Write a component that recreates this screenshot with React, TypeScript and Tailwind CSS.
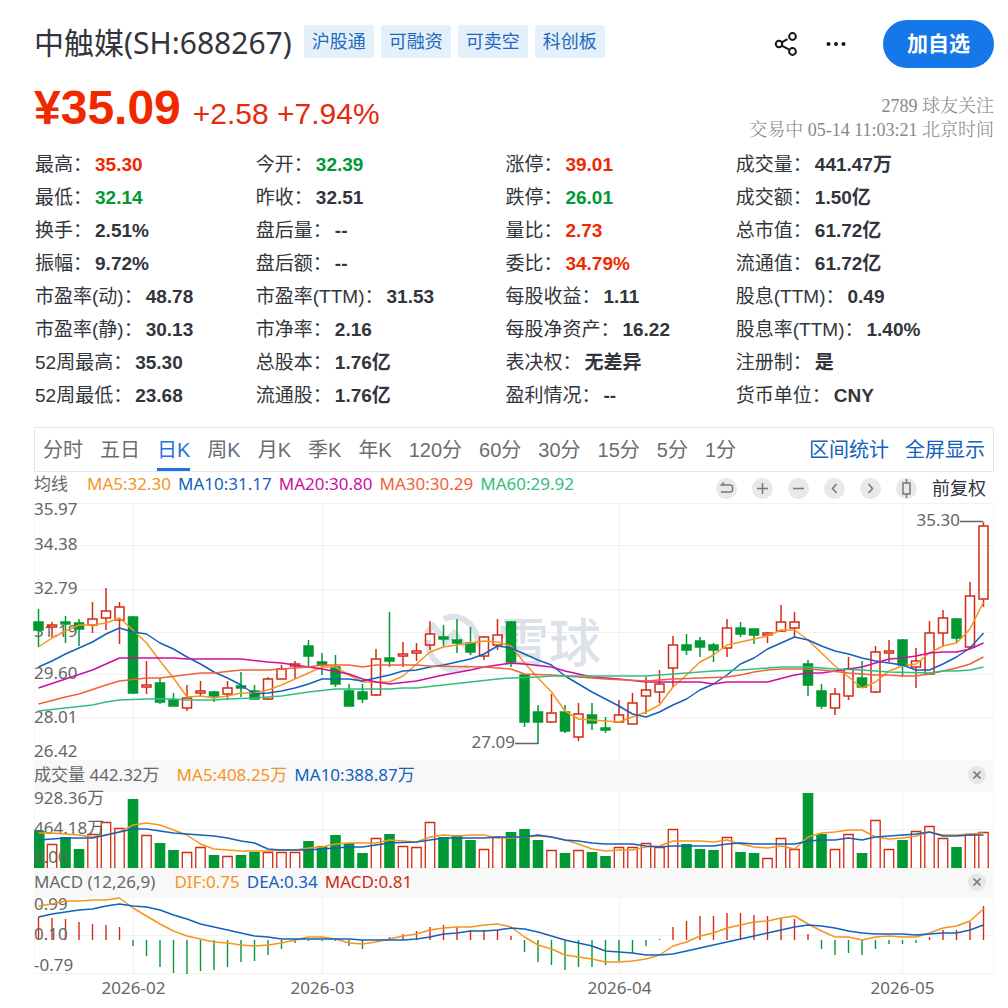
import { useState } from "react";
import clsx from "clsx";

const RED = "#d42a12";
const GREEN = "#009933";
const ORANGE = "#f7941d";
const BLUE = "#1261bd";

const tags = ["沪股通", "可融资", "可卖空", "科创板"];

type Tone = "up" | "down" | "flat";
type Cell = [label: string, value: string, tone?: Tone];

const quoteRows: Cell[][] = [
    [["最高", "35.30", "up"], ["今开", "32.39", "down"], ["涨停", "39.01", "up"], ["成交量", "441.47万"]],
    [["最低", "32.14", "down"], ["昨收", "32.51"], ["跌停", "26.01", "down"], ["成交额", "1.50亿"]],
    [["换手", "2.51%"], ["盘后量", "--"], ["量比", "2.73", "up"], ["总市值", "61.72亿"]],
    [["振幅", "9.72%"], ["盘后额", "--"], ["委比", "34.79%", "up"], ["流通值", "61.72亿"]],
    [["市盈率(动)", "48.78"], ["市盈率(TTM)", "31.53"], ["每股收益", "1.11"], ["股息(TTM)", "0.49"]],
    [["市盈率(静)", "30.13"], ["市净率", "2.16"], ["每股净资产", "16.22"], ["股息率(TTM)", "1.40%"]],
    [["52周最高", "35.30"], ["总股本", "1.76亿"], ["表决权", "无差异"], ["注册制", "是"]],
    [["52周最低", "23.68"], ["流通股", "1.76亿"], ["盈利情况", "--"], ["货币单位", "CNY"]],
];

const toneClass: Record<Tone, string> = {
    up: "text-[#f02800]",
    down: "text-[#009933]",
    flat: "text-[#33353c]",
};

const periods = ["分时", "五日", "日K", "周K", "月K", "季K", "年K", "120分", "60分", "30分", "15分", "5分", "1分"];

const averages = [
    { text: "MA5:32.30", className: "text-[#f7941d]" },
    { text: "MA10:31.17", className: "text-[#1261bd]" },
    { text: "MA20:30.80", className: "text-[#cc0f9f]" },
    { text: "MA30:30.29", className: "text-[#f2603a]" },
    { text: "MA60:29.92", className: "text-[#33bd80]" },
];

// [direction, high, body top, body bottom, low] on the chart's own vertical scale
type Candle = ["r" | "g", number, number, number, number];

const candles: Candle[] = [
    ["g", 609, 622, 630, 647], ["r", 622, 625, 627, 637], ["g", 616, 622, 624, 643], ["g", 619, 623, 629, 646],
    ["r", 602, 619, 625, 633], ["r", 588, 611, 618, 630], ["r", 602, 607, 620, 644], ["g", 616, 617, 693, 694],
    ["r", 661, 685, 687, 694], ["g", 678, 683, 702, 704], ["g", 693, 700, 706, 706], ["r", 685, 698, 708, 711],
    ["r", 681, 691, 693, 696], ["g", 691, 692, 696, 702], ["r", 681, 688, 694, 700], ["g", 672, 686, 688, 697],
    ["g", 685, 691, 699, 699], ["r", 677, 679, 699, 700], ["r", 665, 669, 679, 679], ["r", 661, 664, 666, 679],
    ["g", 640, 646, 656, 668], ["g", 653, 662, 665, 675], ["g", 655, 667, 684, 687], ["g", 684, 691, 706, 706],
    ["g", 684, 692, 699, 703], ["r", 649, 659, 695, 696], ["g", 612, 658, 661, 667], ["r", 642, 654, 656, 667],
    ["r", 643, 651, 653, 661], ["r", 621, 634, 645, 650], ["g", 625, 637, 639, 646], ["g", 619, 640, 643, 653],
    ["g", 627, 643, 652, 655], ["r", 636, 637, 656, 660], ["r", 619, 635, 645, 650], ["g", 621, 622, 662, 667],
    ["g", 674, 675, 722, 727], ["g", 705, 712, 722, 744], ["r", 694, 713, 722, 723], ["g", 705, 712, 731, 733],
    ["r", 703, 714, 737, 741], ["g", 703, 715, 723, 730], ["g", 717, 728, 730, 733], ["r", 700, 715, 722, 722],
    ["r", 693, 703, 724, 724], ["r", 677, 690, 696, 714], ["r", 670, 684, 692, 703], ["r", 636, 645, 668, 687],
    ["g", 634, 645, 650, 655], ["g", 637, 641, 647, 657], ["g", 643, 645, 650, 662], ["r", 619, 628, 648, 657],
    ["g", 622, 628, 634, 637], ["g", 629, 629, 635, 644], ["r", 632, 633, 635, 643], ["r", 605, 622, 631, 632],
    ["r", 612, 622, 628, 638], ["g", 660, 664, 685, 696], ["g", 684, 691, 706, 709], ["r", 688, 694, 708, 715],
    ["r", 657, 669, 696, 700], ["g", 661, 678, 687, 688], ["r", 646, 652, 692, 693], ["r", 640, 651, 653, 662],
    ["g", 639, 640, 665, 677], ["r", 648, 661, 667, 688], ["r", 621, 633, 674, 674], ["r", 610, 618, 633, 647],
    ["g", 618, 619, 638, 642], ["r", 582, 596, 647, 648], ["r", 522, 526, 599, 607],
];

const ma5 = [
    647, 638, 631, 625, 625, 623, 618, 630, 643, 661, 678, 697, 696, 698, 696, 693, 693, 690, 685, 679, 673, 667, 667, 675,
    682, 682, 682, 676, 664, 652, 647, 645, 643, 641, 642, 646, 663, 678, 692, 711, 719, 720, 721, 722, 717, 712, 705, 687,
    675, 662, 655, 645, 642, 639, 636, 630, 630, 640, 653, 666, 677, 688, 682, 671, 666, 664, 653, 646, 643, 629, 602,
];

const ma10 = [
    667, 661, 654, 648, 642, 634, 628, 632, 634, 643, 649, 657, 664, 672, 678, 685, 694, 693, 691, 688, 684, 679, 679, 679,
    681, 678, 675, 671, 670, 667, 665, 662, 659, 654, 646, 648, 654, 660, 665, 676, 684, 692, 699, 706, 714, 717, 712, 705,
    699, 690, 684, 675, 664, 658, 649, 643, 637, 640, 646, 651, 654, 658, 661, 663, 665, 670, 670, 664, 657, 648, 633,
];

// The slow averages only need their turning points: [candle index, y]
const ma20 = [
    [0, 688], [2, 679], [4, 670], [6, 658], [10, 658], [11, 659], [15, 659], [17, 662], [18, 663], [19, 665], [21, 669],
    [23, 674], [24, 679], [25, 682], [26, 684], [28, 681], [30, 675], [32, 670], [33, 667], [34, 665], [35, 663], [36, 664],
    [38, 667], [39, 671], [41, 677], [43, 679], [45, 682], [49, 682], [50, 684], [51, 682], [54, 682], [56, 675], [57, 673],
    [58, 673], [60, 669], [61, 667], [62, 663], [63, 659], [64, 658], [65, 656], [66, 653], [67, 652], [68, 652], [69, 649],
    [70, 643],
];

const ma30 = [
    [0, 704], [2, 697], [3, 694], [5, 685], [6, 681], [8, 678], [9, 678], [12, 673], [13, 673], [15, 670], [17, 670],
    [20, 667], [21, 665], [23, 665], [24, 667], [25, 665], [28, 665], [29, 666], [33, 667], [35, 669], [36, 674], [38, 675],
    [39, 676], [41, 678], [42, 679], [45, 681], [47, 679], [49, 678], [51, 677], [52, 675], [53, 672], [54, 670], [55, 669],
    [57, 669], [58, 670], [60, 673], [62, 675], [63, 675], [64, 676], [65, 676], [66, 674], [67, 671], [68, 668], [69, 664],
    [70, 657],
];

const ma60 = [
    [0, 711], [2, 708], [4, 705], [5, 702], [6, 700], [8, 699], [10, 699], [11, 700], [13, 700], [14, 699], [16, 698],
    [18, 696], [20, 692], [22, 689], [26, 689], [27, 688], [28, 688], [30, 685], [32, 682], [34, 679], [35, 678], [37, 677],
    [38, 676], [45, 676], [46, 675], [48, 673], [50, 671], [52, 670], [53, 669], [55, 667], [57, 667], [59, 669], [61, 670],
    [63, 672], [66, 673], [67, 671], [68, 671], [69, 670], [70, 667],
];

const volumes = [
    831, 844, 837, 849, 834, 822, 828, 799, 835, 843, 850, 852, 847, 855, 856, 855, 852, 852, 852, 852, 841, 846, 835, 843,
    853, 838, 834, 846, 847, 822, 837, 835, 840, 849, 837, 832, 829, 840, 850, 853, 850, 852, 856, 847, 847, 843, 847, 829,
    844, 849, 850, 837, 852, 853, 858, 838, 849, 793, 834, 849, 834, 853, 820, 849, 840, 831, 826, 838, 847, 834, 832,
];

const volumeMa5 = [
    833, 833, 834, 835, 837, 835, 832, 825, 823, 825, 830, 835, 844, 849, 850, 851, 851, 851, 850, 850, 848, 847, 844, 843,
    843, 843, 840, 841, 842, 837, 835, 836, 835, 835, 838, 838, 837, 836, 837, 840, 844, 849, 851, 850, 850, 847, 846, 841,
    841, 841, 842, 840, 844, 847, 848, 846, 849, 837, 833, 832, 830, 830, 837, 839, 838, 836, 832, 835, 835, 834, 833,
];

const volumeMa10 = [
    [0, 840], [1, 839], [2, 838], [4, 838], [5, 835], [6, 832], [7, 829], [8, 829], [9, 831], [10, 833], [11, 834],
    [12, 835], [13, 836], [14, 838], [15, 841], [16, 843], [17, 849], [18, 850], [20, 850], [21, 849], [22, 848], [23, 847],
    [24, 847], [25, 845], [26, 843], [28, 842], [29, 840], [30, 838], [33, 838], [34, 837], [36, 837], [37, 835], [38, 837],
    [39, 840], [40, 841], [41, 843], [42, 844], [44, 844], [45, 846], [46, 847], [47, 846], [50, 846], [51, 844], [52, 843],
    [53, 844], [56, 844], [57, 841], [58, 840], [59, 840], [60, 838], [61, 840], [62, 837], [63, 836], [64, 835], [65, 834],
    [66, 832], [67, 836], [68, 836], [69, 835], [70, 835],
];

const macdBars = [
    917, 918, 919, 922, 924, 925, 927, 946, 956, 967, 973, 974, 971, 970, 967, 962, 961, 955, 949, 943, 941, 941, 941, 946,
    949, 941, 937, 934, 931, 927, 925, 927, 930, 930, 930, 936, 952, 962, 965, 970, 967, 967, 965, 961, 953, 946, 939, 927,
    921, 916, 916, 913, 913, 915, 916, 918, 919, 934, 949, 955, 953, 955, 949, 944, 944, 943, 937, 930, 930, 922, 906,
];

const dif = [
    906, 904, 901, 901, 900, 900, 898, 908, 916, 924, 931, 936, 939, 942, 943, 945, 946, 945, 943, 940, 937, 937, 939, 943,
    944, 942, 939, 936, 934, 930, 928, 927, 927, 925, 924, 927, 937, 945, 949, 955, 957, 959, 962, 962, 961, 959, 955, 946,
    942, 936, 933, 928, 925, 922, 921, 918, 916, 924, 931, 937, 937, 940, 937, 936, 937, 937, 933, 928, 926, 921, 909,
];

const dea = [
    917, 914, 912, 910, 909, 906, 904, 906, 907, 910, 915, 919, 924, 927, 930, 933, 936, 937, 939, 939, 939, 939, 939, 939,
    940, 940, 940, 940, 939, 937, 934, 933, 931, 931, 930, 928, 929, 932, 936, 940, 943, 946, 951, 952, 953, 955, 955, 954,
    951, 948, 945, 942, 939, 936, 933, 930, 927, 925, 926, 928, 931, 933, 934, 934, 934, 935, 934, 933, 933, 930, 925,
];

const months = [
    { label: "2026-02", x: 133.5 },
    { label: "2026-03", x: 322.5 },
    { label: "2026-04", x: 619.5 },
    { label: "2026-05", x: 902.5 },
];

const xAt = (i: number) => 38.5 + i * 13.5;

const indexed = (values: number[]) => values.map((y, i) => [i, y]);

function Line({ points, color }: { points: number[][]; color: string }) {
    return (
        <polyline
            points={points.map(([i, y]) => `${xAt(i)},${y}`).join(" ")}
            fill="none"
            stroke={color}
            strokeWidth="1.5"
            strokeLinejoin="round"
        />
    );
}

function Grid({ rows, top, bottom }: { rows: number[]; top: number; bottom: number }) {
    return (
        <g stroke="#f1f1f1" strokeWidth="1">
            {rows.map((y) => (
                <line key={y} x1="34" x2="994" y1={y} y2={y} />
            ))}
            {months.map((month) => (
                <line key={month.label} x1={month.x} x2={month.x} y1={top} y2={bottom} />
            ))}
            <line x1="34.5" x2="34.5" y1={top} y2={bottom} stroke="#f7f7f7" />
            <line x1="993.5" x2="993.5" y1={top} y2={bottom} stroke="#f7f7f7" />
        </g>
    );
}

function AxisLabels({ items }: { items: [string, number][] }) {
    return (
        <g fill="#666" fontSize="17">
            {items.map(([label, y]) => (
                <text key={label} x="34" y={y}>
                    {label}
                </text>
            ))}
        </g>
    );
}

function PriceChart() {
    return (
        <svg viewBox="34 503 960 257" className="relative block w-full overflow-visible" role="img" aria-label="日K线">
            <Grid rows={[503.5, 545.5, 589.5, 632.5, 674.5, 717.5]} top={503} bottom={760} />

            {/* Водяной знак */}
            <g fill="none" stroke="#dce1ea" strokeWidth="6">
                <path d="M444 619C460 612 478 624 478 646" />
                <path d="M428 640C427 662 450 676 469 667" />
                <path d="M426 633l7-7 15 18M445 643l9-10 18 20" />
            </g>
            <text x="497" y="662" fontSize="52" fontWeight="500" fill="#dce1ea">
                雪球
            </text>

            <AxisLabels
                items={[
                    ["35.97", 515],
                    ["34.38", 550],
                    ["32.79", 594],
                    ["31.19", 637],
                    ["29.60", 679],
                    ["28.01", 723],
                    ["26.42", 757],
                ]}
            />

            {candles.map(([kind, high, top, bottom, low], i) => {
                const x = xAt(i);
                const color = kind === "r" ? RED : GREEN;
                return (
                    <g key={i} stroke={color} strokeWidth="1.5">
                        <line x1={x} x2={x} y1={high} y2={top} />
                        <line x1={x} x2={x} y1={bottom} y2={low} />
                        <rect
                            x={x - 4.5}
                            y={top}
                            width="9"
                            height={bottom - top}
                            fill={kind === "r" ? "none" : color}
                        />
                    </g>
                );
            })}

            <Line points={indexed(ma5)} color={ORANGE} />
            <Line points={indexed(ma10)} color={BLUE} />
            <Line points={ma20} color="#cc0f9f" />
            <Line points={ma30} color="#f2603a" />
            <Line points={ma60} color="#33bd80" />

            <g fill="#666" fontSize="17" textAnchor="end">
                <text x="960" y="526">35.30</text>
                <text x="515" y="748">27.09</text>
            </g>
            <path d="M960 521.5h23M515 743.5h23" stroke="#666" strokeWidth="1.4" />
        </svg>
    );
}

function VolumeChart() {
    return (
        <svg viewBox="34 792 960 76" className="relative block w-full overflow-visible" role="img" aria-label="成交量">
            <Grid rows={[829.5, 867.5]} top={792} bottom={868} />
            {volumes.map((y, i) => {
                const x = xAt(i);
                return candles[i][0] === "g" ? (
                    <rect key={i} x={Math.max(x - 5.3, 34)} y={y} width="10.6" height={868 - y} fill={GREEN} />
                ) : (
                    <path key={i} d={`M${x - 4.7} 868V${y + 0.5}h9.4V868`} fill="none" stroke={RED} strokeWidth="1.3" />
                );
            })}
            <AxisLabels
                items={[
                    ["928.36万", 804],
                    ["464.18万", 834],
                    ["0.00", 863],
                ]}
            />
            <Line points={indexed(volumeMa5)} color={ORANGE} />
            <Line points={volumeMa10} color={BLUE} />
        </svg>
    );
}

function MacdChart() {
    return (
        <svg viewBox="34 898 960 110" className="relative block w-full overflow-visible" role="img" aria-label="MACD">
            <Grid rows={[935.5, 973.5]} top={898} bottom={974} />
            {macdBars.map((y, i) => (
                <line key={i} x1={xAt(i)} x2={xAt(i)} y1="940" y2={y} stroke={y < 940 ? RED : GREEN} strokeWidth="1.4" />
            ))}
            <AxisLabels
                items={[
                    ["0.99", 910],
                    ["0.10", 940],
                    ["-0.79", 971],
                ]}
            />
            <Line points={indexed(dif)} color={ORANGE} />
            <Line points={indexed(dea)} color={BLUE} />
            <g fill="#666" fontSize="17" textAnchor="middle">
                {months.map((month) => (
                    <text key={month.label} x={month.x} y="994">
                        {month.label}
                    </text>
                ))}
            </g>
        </svg>
    );
}

const tools = [
    { label: "撤销", path: "M8 4.5L5.500 7H14a2.600 2.600 0 0 1 2.600 2.600v1.600A2.600 2.600 0 0 1 14 14H5" },
    { label: "放大", path: "M10.500 5v11M5 10.500h11" },
    { label: "缩小", path: "M5 10.500h11" },
    { label: "向左", path: "M12.500 6l-4 4.500 4 4.500" },
    { label: "向右", path: "M8.500 6l4 4.500-4 4.500" },
    { label: "蜡烛图", path: "M7 5h7v11H7zM10.500 1v4M10.500 16v4" },
];

function CloseButton({ label }: { label: string }) {
    return (
        <button aria-label={label} className="flex h-[18px] w-[18px] items-center justify-center rounded-full bg-[#e6e6e6]">
            <svg viewBox="0 0 18 18" className="h-[18px] w-[18px]">
                <path d="M5.500 5.500l7 7M12.500 5.500l-7 7" stroke="#777" strokeWidth="1.7" />
            </svg>
        </button>
    );
}

export default function App() {
    const [period, setPeriod] = useState("日K");

    return (
        <main className="bg-white pt-5 pr-[14px] pl-[34px] font-['Noto_Sans','Noto_Sans_CJK_SC',sans-serif] text-[#33353c]">
            <header className="flex items-center justify-between">
                <div className="flex h-12 items-start">
                    <h1 className="text-[30px] leading-[46px] whitespace-nowrap">中触媒(SH:688267)</h1>
                    <ul className="ml-3 flex gap-[7px] pt-[5px]">
                        {tags.map((tag) => (
                            <li
                                key={tag}
                                className="rounded-[3px] bg-[#e4f0fa] px-2 text-[18px] leading-[33px] whitespace-nowrap text-[#1f69c0]"
                            >
                                {tag}
                            </li>
                        ))}
                    </ul>
                </div>

                <div className="flex items-center">
                    <button aria-label="分享">
                        <svg viewBox="0 0 24 26" className="h-[26px] w-6" fill="none" stroke="#15161f" strokeWidth="2">
                            <circle cx="5" cy="13" r="3.200" />
                            <circle cx="18.500" cy="5.500" r="3.400" />
                            <circle cx="18.500" cy="20.500" r="3.400" />
                            <path d="M7.800 11.400l5.600-3.200M7.800 14.600l7.800 4.200" />
                        </svg>
                    </button>
                    <button aria-label="更多" className="ml-[26px]">
                        <svg viewBox="0 0 24 24" className="h-6 w-6" fill="#15161f">
                            <circle cx="4.500" cy="12" r="2" />
                            <circle cx="12" cy="12" r="2" />
                            <circle cx="19.500" cy="12" r="2" />
                        </svg>
                    </button>
                    <button className="ml-[35px] h-12 rounded-full bg-[#1677e8] px-6 text-[21px] font-bold whitespace-nowrap text-white">
                        加自选
                    </button>
                </div>
            </header>

            <section className="mt-4 flex justify-between">
                <p className="flex items-baseline gap-[12px] font-['Liberation_Sans',sans-serif] leading-[48px] whitespace-nowrap text-[#f02800]">
                    <strong className="text-5xl leading-[48px]">¥35.09</strong>
                    <span className="text-[30px] text-[#e32b0e]">+2.58 +7.94%</span>
                </p>
                <div className="pt-[10px] text-right font-['Liberation_Serif','Noto_Serif_CJK_SC','Noto_Sans_CJK_SC',serif] text-[18px] leading-6 font-light text-[#85878e]">
                    <p>2789 球友关注</p>
                    <p>交易中 05-14 11:03:21 北京时间</p>
                </div>
            </section>

            <table className="mt-[6px] w-full table-fixed font-['Liberation_Sans','Noto_Sans_CJK_SC',sans-serif] text-[19px] leading-[33px] whitespace-nowrap">
                <colgroup>
                    <col className="w-[23%]" />
                    <col className="w-[26%]" />
                    <col className="w-[24%]" />
                    <col className="w-[27%]" />
                </colgroup>
                <tbody>
                    {quoteRows.map((row) => (
                        <tr key={row[0][0]}>
                            {row.map(([label, value, tone = "flat"]) => (
                                <td key={label} className="h-[33px] p-0 pl-px">
                                    {label}：<span className={clsx("ml-[3px] font-bold", toneClass[tone])}>{value}</span>
                                </td>
                            ))}
                        </tr>
                    ))}
                </tbody>
            </table>

            <nav className="mt-[15px] flex h-[45px] items-stretch justify-between border border-[#e6e6e8] pr-2 pl-2 font-['Liberation_Sans','Noto_Sans_CJK_SC',sans-serif] text-xl whitespace-nowrap text-[#6b6d73]">
                <div className="flex gap-[17px]">
                    {periods.map((item) => (
                        <button
                            key={item}
                            onClick={() => setPeriod(item)}
                            className={clsx(
                                "border-b-[3px] pt-[3px]",
                                item === period ? "border-[#1f72e0] text-[#1f72e0]" : "border-transparent",
                            )}
                        >
                            {item}
                        </button>
                    ))}
                </div>
                <div className="flex gap-4 text-[#1261bd]">
                    <button>区间统计</button>
                    <button>全屏显示</button>
                </div>
            </nav>

            <div className="flex h-[31px] justify-between text-[17px] whitespace-nowrap">
                <p className="flex gap-[7px] leading-6">
                    <span className="mr-3 text-[#66686e]">均线</span>
                    {averages.map((item) => (
                        <span key={item.text} className={item.className}>
                            {item.text}
                        </span>
                    ))}
                </p>
                <div className="flex items-center gap-[15px] pt-[2px] pr-2">
                    {tools.map((tool) => (
                        <button key={tool.label} aria-label={tool.label} className="h-[21px] w-[21px] rounded-full bg-[#e9e9e9]">
                            <svg viewBox="0 0 21 21" className="h-[21px] w-[21px]" fill="none" stroke="#777" strokeWidth="1.500">
                                <path d={tool.path} />
                            </svg>
                        </button>
                    ))}
                    <button className="text-[18px]">前复权</button>
                </div>
            </div>

            <PriceChart />

            <div className="flex h-8 items-center justify-between bg-[#f8f8f8] pr-2 pb-[2px] text-[17px] whitespace-nowrap">
                <p className="flex gap-[7px]">
                    <span className="mr-[10px] text-[#66686e]">成交量 442.32万</span>
                    <span className="text-[#f7941d]">MA5:408.25万</span>
                    <span className="text-[#1261bd]">MA10:388.87万</span>
                </p>
                <CloseButton label="关闭成交量" />
            </div>
            <VolumeChart />

            <div className="flex h-[30px] items-center justify-between bg-[#f8f8f8] pr-2 pb-[2px] text-[17px] whitespace-nowrap">
                <p className="flex gap-[7px]">
                    <span className="mr-3 text-[#66686e]">MACD (12,26,9)</span>
                    <span className="text-[#f7941d]">DIF:0.75</span>
                    <span className="text-[#1261bd]">DEA:0.34</span>
                    <span className="text-[#d42a12]">MACD:0.81</span>
                </p>
                <CloseButton label="关闭MACD" />
            </div>
            <MacdChart />
        </main>
    );
}
